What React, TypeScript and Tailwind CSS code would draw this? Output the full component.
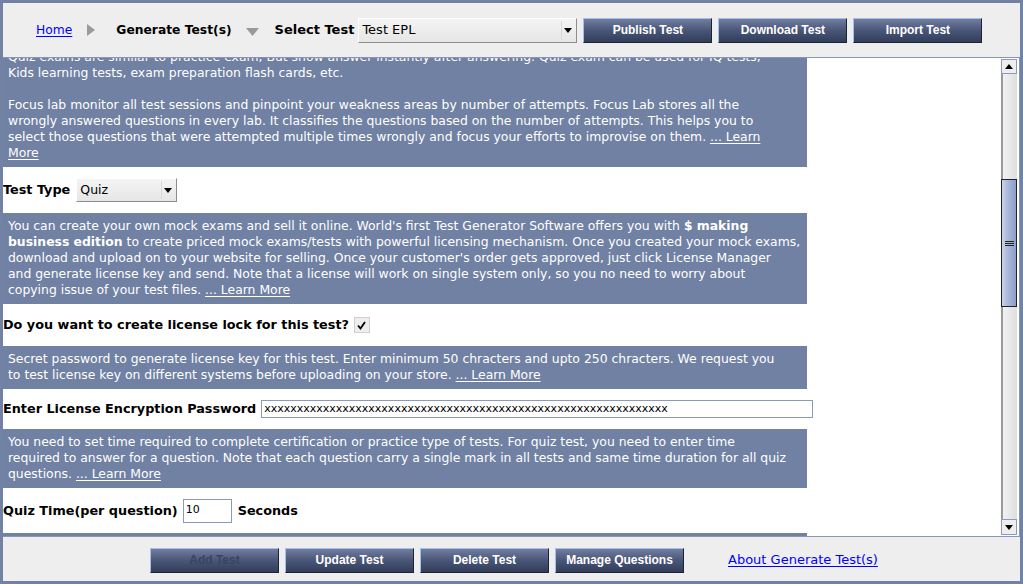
import type { ReactNode } from 'react';

const font = "font-['DejaVu_Sans',Verdana,sans-serif]";

function NavButton({ label, disabled }: { label: string; disabled?: boolean }) {
  return (
    <button
      type="button"
      className={`h-[25px] w-[129px] shrink-0 border border-t-[#a6bdf2] border-l-[#a6bdf2] border-r-[#1d2333] border-b-[#1d2333] bg-gradient-to-b from-[#707ea0] via-[#4a5677] to-[#323d5a] font-['Liberation_Sans',Arial,sans-serif] text-[12px] font-bold ${
        disabled ? 'text-[#3a4460]' : 'text-white'
      }`}
    >
      {label}
    </button>
  );
}

function DownArrow({ className = '' }: { className?: string }) {
  return (
    <svg width="8" height="5" viewBox="0 0 8 5" className={className}>
      <path d="M0 0h8L4 5z" fill="#000" />
    </svg>
  );
}

function Select({ value, width, height, size }: { value: string; width: string; height: string; size: string }) {
  return (
    <div
      className={`flex ${width} ${height} shrink-0 items-center border border-t-white border-l-white border-r-[#8d8d8d] border-b-[#8d8d8d] bg-gradient-to-b from-[#f4f4f4] to-[#e6e6e6] ${font}`}
    >
      <span className={`flex-1 pl-[3px] ${size} text-black`}>{value}</span>
      <span className="mr-[2px] flex h-[calc(100%-4px)] w-[13px] items-center justify-center border-l border-[#d8d8d8]">
        <DownArrow />
      </span>
    </div>
  );
}

function InfoBox({ children }: { children: ReactNode }) {
  return (
    <div className="w-[804px] whitespace-nowrap bg-[#7181a3] pt-[5px] pb-[6px] pl-[5px] text-[12.4px] leading-[16px] text-white">
      {children}
    </div>
  );
}

function Learn({ children }: { children: ReactNode }) {
  return <span className="underline underline-offset-2">{children}</span>;
}

function Label({ children }: { children: ReactNode }) {
  return <span className="shrink-0 text-[12.8px] font-bold text-black">{children}</span>;
}

function Scrollbar() {
  return (
    <div className="mr-[2px] mt-[1px] mb-[1px] flex w-[16px] shrink-0 flex-col">
      <div className="flex h-[15px] items-center justify-center border border-[#8a9bbf] bg-[#eeeeee]">
        <DownArrow className="rotate-180" />
      </div>
      <div className="flex flex-1 flex-col border-l-2 border-[#9a9a9a] bg-gradient-to-r from-[#f2f2f2] to-[#dedede]">
        <div className="h-[105px]" />
        <div className="-ml-[2px] flex h-[128px] items-center justify-center border border-[#222] bg-gradient-to-r from-[#c8d3ea] via-[#a4b4d8] to-[#8c9dc8]">
          <div className="flex w-[9px] flex-col gap-[1px]">
            <div className="h-px bg-[#222]" />
            <div className="h-px bg-[#222]" />
            <div className="h-px bg-[#222]" />
          </div>
        </div>
        <div className="flex-1" />
      </div>
      <div className="flex h-[16px] items-center justify-center border border-[#8a9bbf] bg-[#eeeeee]">
        <DownArrow />
      </div>
    </div>
  );
}

export default function App() {
  return (
    <div className={`flex h-[584px] w-[1023px] flex-col overflow-hidden border-[3px] border-[#7282a5] bg-[#eeeeee] ${font}`}>
      {/* Top navigation */}
      <div className="flex h-[54px] shrink-0 items-center pl-[33px]">
        <a className="text-[12.3px] text-[#0000ff] underline underline-offset-2">Home</a>
        <svg width="8" height="12" viewBox="0 0 8 12" className="ml-[15px]">
          <path d="M0 0l8 6-8 6z" fill="#9a9a9a" />
        </svg>
        <span className="ml-[21px] text-[12.3px] font-bold text-black">Generate Test(s)</span>
        <svg width="13" height="8" viewBox="0 0 13 8" className="ml-[14px] mt-[3px]">
          <path d="M0 0h13L6.5 8z" fill="#9a9a9a" />
        </svg>
        <span className="ml-[16px] text-[13px] font-bold text-black">Select Test</span>
        <div className="ml-[4px]">
          <Select value="Test EPL" width="w-[219px]" height="h-[25px]" size="text-[13px]" />
        </div>
        <div className="ml-[6px] flex gap-[6px]">
          <NavButton label="Publish Test" />
          <NavButton label="Download Test" />
          <NavButton label="Import Test" />
        </div>
      </div>

      {/* Scroll pane */}
      <div className="flex h-[480px] shrink-0 border-t border-r border-b border-[#8696b9] bg-white">
        <div className="min-w-0 flex-1 overflow-hidden">
          <div className="-mt-[14px] flex flex-col">
            <InfoBox>
              <div>Quiz exams are similar to practice exam, But show answer instantly after answering. Quiz exam can be used for IQ tests,</div>
              <div>Kids learning tests, exam preparation flash cards, etc.</div>
              <div className="h-[16px]" />
              <div>Focus lab monitor all test sessions and pinpoint your weakness areas by number of attempts. Focus Lab stores all the</div>
              <div>wrongly answered questions in every lab. It classifies the questions based on the number of attempts. This helps you to</div>
              <div>
                select those questions that were attempted multiple times wrongly and focus your efforts to improvise on them. <Learn>... Learn</Learn>
              </div>
              <div>
                <Learn>More</Learn>
              </div>
            </InfoBox>

            <div className="flex h-[46px] items-center">
              <Label>Test Type</Label>
              <div className="ml-[6px]">
                <Select value="Quiz" width="w-[101px]" height="h-[24px]" size="text-[12.5px]" />
              </div>
            </div>

            <InfoBox>
              <div>
                You can create your own mock exams and sell it online. World's first Test Generator Software offers you with <b>$ making</b>
              </div>
              <div>
                <b>business edition</b> to create priced mock exams/tests with powerful licensing mechanism. Once you created your mock exams,
              </div>
              <div>download and upload on to your website for selling. Once your customer's order gets approved, just click License Manager</div>
              <div>and generate license key and send. Note that a license will work on single system only, so you no need to worry about</div>
              <div>
                copying issue of your test files. <Learn>... Learn More</Learn>
              </div>
            </InfoBox>

            <div className="flex h-[42px] items-center">
              <Label>Do you want to create license lock for this test?</Label>
              <span className="ml-[5px] flex h-[16px] w-[16px] items-center justify-center border border-[#d0d0d0] bg-[#eeeeee]">
                <svg width="9" height="9" viewBox="0 0 9 9">
                  <path d="M1 4.5l2.5 3L8 1" stroke="#000" strokeWidth="1.8" fill="none" />
                </svg>
              </span>
            </div>

            <InfoBox>
              <div>Secret password to generate license key for this test. Enter minimum 50 chracters and upto 250 chracters. We request you</div>
              <div>
                to test license key on different systems before uploading on your store. <Learn>... Learn More</Learn>
              </div>
            </InfoBox>

            <div className="flex h-[40px] items-center">
              <Label>Enter License Encryption Password</Label>
              <div className="ml-[5px] flex h-[18px] w-[552px] shrink-0 items-center border border-[#8a9abd] bg-white pl-[2px] text-[11px] text-black">
                {'x'.repeat(62)}
              </div>
            </div>

            <InfoBox>
              <div>You need to set time required to complete certification or practice type of tests. For quiz test, you need to enter time</div>
              <div>required to answer for a question. Note that each question carry a single mark in all tests and same time duration for all quiz</div>
              <div>
                questions. <Learn>... Learn More</Learn>
              </div>
            </InfoBox>

            <div className="flex h-[45px] items-center">
              <Label>Quiz Time(per question)</Label>
              <div className="ml-[5px] flex h-[24px] w-[49px] shrink-0 items-center border border-[#8a9abd] bg-white pl-[2px] text-[11px] text-black">
                10
              </div>
              <span className="ml-[6px] text-[12.8px] font-bold text-black">Seconds</span>
            </div>

            <InfoBox>
              <div>Provide the certification details which will be printed on the certificate.</div>
            </InfoBox>
          </div>
        </div>
        <Scrollbar />
      </div>

      {/* Bottom actions */}
      <div className="flex flex-1 items-center pl-[147px] pt-[2px]">
        <div className="flex gap-[6px]">
          <NavButton label="Add Test" disabled />
          <NavButton label="Update Test" />
          <NavButton label="Delete Test" />
          <NavButton label="Manage Questions" />
        </div>
        <a className="ml-[44px] text-[13px] text-[#0000ff] underline underline-offset-2">About Generate Test(s)</a>
      </div>
    </div>
  );
}
